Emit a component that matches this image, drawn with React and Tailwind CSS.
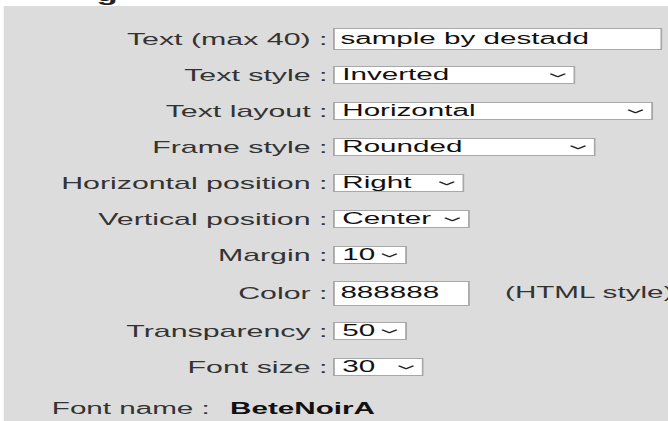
import React from "react";

// Settings form rows: label on the left, control on the right
const rows = [
  { label: "Text (max 40) :", type: "input", value: "sample by destadd", box: "w-[178px] h-[22px]" },
  { label: "Text style :", type: "select", value: "Inverted", box: "w-[131px]" },
  { label: "Text layout :", type: "select", value: "Horizontal", box: "w-[173px]" },
  { label: "Frame style :", type: "select", value: "Rounded", box: "w-[142px]" },
  { label: "Horizontal position :", type: "select", value: "Right", box: "w-[71px]" },
  { label: "Vertical position :", type: "select", value: "Center", box: "w-[74px]" },
  { label: "Margin :", type: "select", value: "10", box: "w-[40px]" },
  { label: "Color :", type: "input", value: "888888", box: "w-[74px] h-[25px]", note: "(HTML style)", row: "h-[40px]" },
  { label: "Transparency :", type: "select", value: "50", box: "w-[40px]" },
  { label: "Font size :", type: "select", value: "30", box: "w-[49px]" },
];

function Chevron() {
  return (
    <svg viewBox="0 0 9 5" className="h-[5px] w-[9px]" fill="none">
      <path d="M0.8 1 L4.5 3.8 L8.2 1" stroke="#222" strokeWidth="1.1" strokeLinecap="round" strokeLinejoin="round" />
    </svg>
  );
}

function Select({ value, box }) {
  return (
    <div className={`flex h-[18px] items-center justify-between border border-[#a8a8a8] bg-white pl-[4px] pr-[4px] leading-none text-[#111] ${box}`}>
      <span>{value}</span>
      <Chevron />
    </div>
  );
}

function TextInput({ value, box }) {
  return (
    <div className={`flex items-center border border-[#a8a8a8] bg-white pl-[3px] leading-none text-[#111] ${box}`}>
      {value}
    </div>
  );
}

export default function App() {
  return (
    <div className="h-[421px] w-[668px] overflow-hidden bg-white">
      <div className="flex h-full w-[380px] origin-left scale-x-[1.85] flex-col font-['Liberation_Sans',Arial,sans-serif] text-[16px]">
        {/* tail of the page heading above */}
        <div className="h-[6px] shrink-0 overflow-hidden bg-white">
          <span className="-mt-[15px] ml-[52px] block text-[19px] font-bold leading-none text-[#222]">g</span>
        </div>

        <div className="ml-[2px] flex-1 bg-[#dcdcdc] pt-[15px]">
          {rows.map((r) => (
            <div key={r.label} className={`flex items-center ${r.row || "h-9"}`}>
              <div className="w-[175px] text-right text-[16.4px] leading-none text-[#333]">{r.label}</div>
              <div className="ml-[3px] flex items-center">
                {r.type === "input" ? <TextInput value={r.value} box={r.box} /> : <Select value={r.value} box={r.box} />}
                {r.note && <span className="ml-[19px] leading-none text-[#333]">{r.note}</span>}
              </div>
            </div>
          ))}

          <div className="mt-[6px] flex h-9 items-center pl-[26px] leading-none">
            <span className="text-[#333]">Font name :</span>
            <span className="ml-[11px] font-bold text-[#111]">BeteNoirA</span>
          </div>
        </div>
      </div>
    </div>
  );
}
